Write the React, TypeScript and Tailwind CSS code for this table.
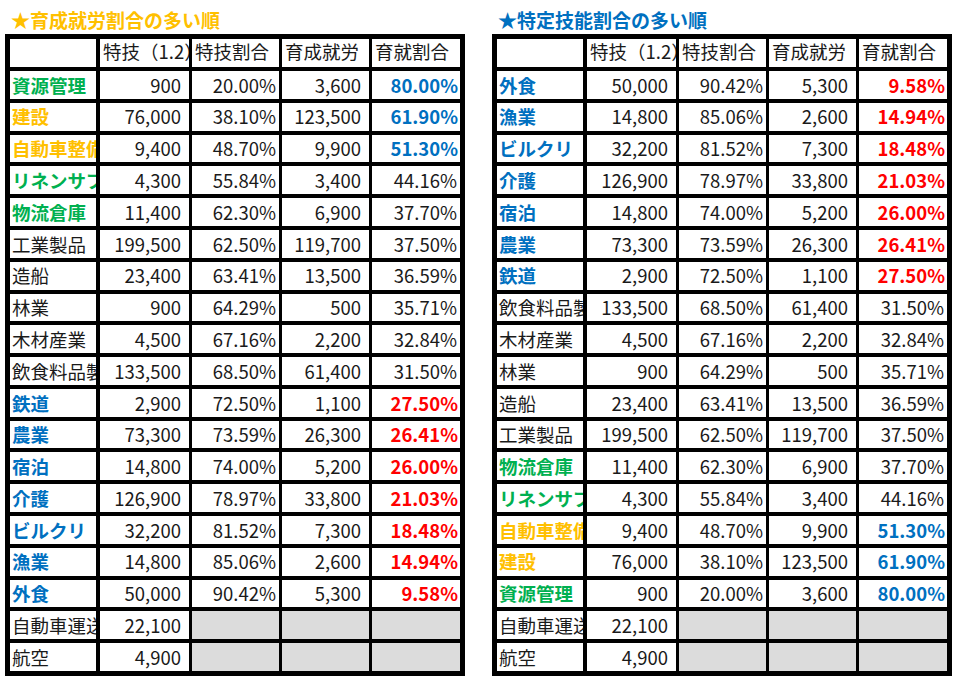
import React from 'react';

type Row = {
  name: string;
  nc: string; // 名前の色
  a: string;
  ap: string;
  b: string;
  bp: string;
  pc: string; // 割合の色
};

const GREEN = 'g';
const ORANGE = 'o';
const BLUE = 'b';
const RED = 'r';

// 育成就労割合の多い順
const rows: Row[] = [
  { name: '資源管理', nc: GREEN, a: '900', ap: '20.00%', b: '3,600', bp: '80.00%', pc: BLUE },
  { name: '建設', nc: ORANGE, a: '76,000', ap: '38.10%', b: '123,500', bp: '61.90%', pc: BLUE },
  { name: '自動車整備', nc: ORANGE, a: '9,400', ap: '48.70%', b: '9,900', bp: '51.30%', pc: BLUE },
  { name: 'リネンサプライ', nc: GREEN, a: '4,300', ap: '55.84%', b: '3,400', bp: '44.16%', pc: '' },
  { name: '物流倉庫', nc: GREEN, a: '11,400', ap: '62.30%', b: '6,900', bp: '37.70%', pc: '' },
  { name: '工業製品', nc: '', a: '199,500', ap: '62.50%', b: '119,700', bp: '37.50%', pc: '' },
  { name: '造船', nc: '', a: '23,400', ap: '63.41%', b: '13,500', bp: '36.59%', pc: '' },
  { name: '林業', nc: '', a: '900', ap: '64.29%', b: '500', bp: '35.71%', pc: '' },
  { name: '木材産業', nc: '', a: '4,500', ap: '67.16%', b: '2,200', bp: '32.84%', pc: '' },
  { name: '飲食料品製造', nc: '', a: '133,500', ap: '68.50%', b: '61,400', bp: '31.50%', pc: '' },
  { name: '鉄道', nc: BLUE, a: '2,900', ap: '72.50%', b: '1,100', bp: '27.50%', pc: RED },
  { name: '農業', nc: BLUE, a: '73,300', ap: '73.59%', b: '26,300', bp: '26.41%', pc: RED },
  { name: '宿泊', nc: BLUE, a: '14,800', ap: '74.00%', b: '5,200', bp: '26.00%', pc: RED },
  { name: '介護', nc: BLUE, a: '126,900', ap: '78.97%', b: '33,800', bp: '21.03%', pc: RED },
  { name: 'ビルクリ', nc: BLUE, a: '32,200', ap: '81.52%', b: '7,300', bp: '18.48%', pc: RED },
  { name: '漁業', nc: BLUE, a: '14,800', ap: '85.06%', b: '2,600', bp: '14.94%', pc: RED },
  { name: '外食', nc: BLUE, a: '50,000', ap: '90.42%', b: '5,300', bp: '9.58%', pc: RED },
];

const extra = [
  { name: '自動車運送', a: '22,100' },
  { name: '航空', a: '4,900' },
];

const colorClass = (c: string) => {
  if (c === GREEN) return 'text-[#00b050] font-bold';
  if (c === ORANGE) return 'text-[#ffc000] font-bold';
  if (c === BLUE) return 'text-[#0070c0] font-bold';
  if (c === RED) return 'text-[#ff0000] font-bold';
  return 'text-[#1a1a1a]';
};

const headers = ['特技（1.2）', '特技割合', '育成就労', '育就割合'];

const Sheet = ({ title, titleColor, data }: { title: string; titleColor: string; data: Row[] }) => (
  <div className="flex flex-col">
    <div className={`h-[34px] pt-[8px] pl-[6px] text-[19px] leading-[24px] font-bold whitespace-nowrap ${titleColor}`}>
      {title}
    </div>
    <div className="grid grid-cols-[87px_89px_87px_87px_88px] grid-rows-[28px_repeat(19,minmax(0,1fr))] gap-x-[3px] gap-y-[4px] bg-black p-[5px] w-[460px] h-[642px] text-[18.5px] leading-none">
      {/* 見出し */}
      <div className="bg-white border-r border-black" />
      {headers.map((h) => (
        <div key={h} className="bg-white flex items-center pl-[3px] pb-[3px] overflow-hidden whitespace-nowrap text-[#1a1a1a]">
          {h}
        </div>
      ))}

      {data.map((r) => (
        <React.Fragment key={r.name}>
          <div className={`bg-white border-r border-black flex items-center pl-[2px] overflow-hidden whitespace-nowrap ${colorClass(r.nc)}`}>
            {r.name}
          </div>
          <div className="bg-white flex items-center justify-end pr-[8px] text-[#1a1a1a]">{r.a}</div>
          <div className="bg-white flex items-center justify-end pr-[3px] text-[#1a1a1a]">{r.ap}</div>
          <div className="bg-white flex items-center justify-end pr-[8px] text-[#1a1a1a]">{r.b}</div>
          <div className={`bg-white flex items-center justify-end ${r.pc ? 'pr-[2px]' : 'pr-[3px]'} ${colorClass(r.pc)}`}>
            {r.bp}
          </div>
        </React.Fragment>
      ))}

      {extra.map((r) => (
        <React.Fragment key={r.name}>
          <div className="bg-white border-r border-black flex items-center pl-[2px] overflow-hidden whitespace-nowrap text-[#1a1a1a]">
            {r.name}
          </div>
          <div className="bg-white flex items-center justify-end pr-[8px] text-[#1a1a1a]">{r.a}</div>
          <div className="bg-[#dcdcdc]" />
          <div className="bg-[#dcdcdc]" />
          <div className="bg-[#dcdcdc]" />
        </React.Fragment>
      ))}
    </div>
  </div>
);

export default function App() {
  return (
    <div
      className="w-[961px] h-[681px] bg-white overflow-hidden flex gap-[27px] pl-[5px]"
      style={{ fontFamily: '"Noto Sans CJK JP", "Noto Sans", sans-serif' }}
    >
      <Sheet title="★育成就労割合の多い順" titleColor="text-[#ffc000]" data={rows} />
      <Sheet title="★特定技能割合の多い順" titleColor="text-[#0070c0]" data={[...rows].reverse()} />
    </div>
  );
}
